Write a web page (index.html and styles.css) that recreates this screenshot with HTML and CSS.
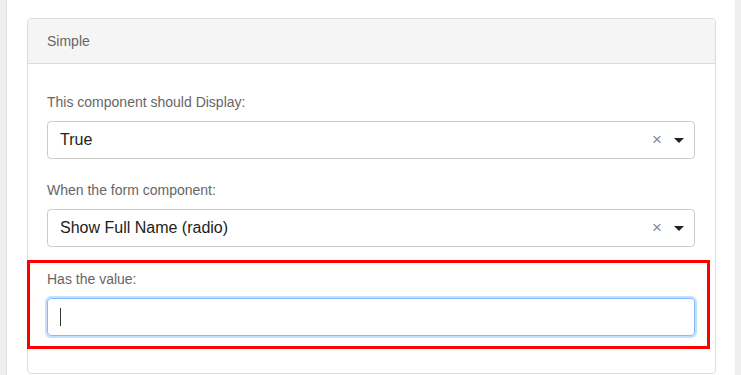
FILE: index.html
```html
<!DOCTYPE html>
<html>
<head>
<meta charset="utf-8">
<link rel="stylesheet" href="styles.css">
</head>
<body>
<div class="page">
  <div class="panel">
    <div class="panel-heading">Simple</div>
    <div class="panel-body">
      <div class="group">
        <label class="lbl">This component should Display:</label>
        <div class="select">
          <span class="value">True</span>
          <span class="clear">×</span>
          <span class="caret"></span>
        </div>
      </div>
      <div class="group">
        <label class="lbl">When the form component:</label>
        <div class="select">
          <span class="value">Show Full Name (radio)</span>
          <span class="clear">×</span>
          <span class="caret"></span>
        </div>
      </div>
      <div class="group last">
        <label class="lbl">Has the value:</label>
        <div class="input"><span class="cursor"></span></div>
        <div class="highlight"></div>
      </div>
    </div>
  </div>
</div>
</body>
</html>
```
FILE: styles.css
```css
html, body {
  margin: 0;
  padding: 0;
  background: #efefef;
  font-family: "Liberation Sans", Arial, sans-serif;
}
.page {
  margin-left: 6px;
  width: 729px;
  height: 375px;
  background: #fff;
  border-left: 1px solid #e2e2e2;
  padding: 18px 0 0 20px;
  box-sizing: border-box;
}
.panel {
  width: 689px;
  height: 356px;
  box-sizing: border-box;
  border: 1px solid #dcdcdc;
  border-radius: 4px;
  background: #fff;
}
.panel-heading {
  height: 45px;
  box-sizing: border-box;
  background: #f5f5f5;
  border-bottom: 1px solid #dcdcdc;
  border-radius: 3px 3px 0 0;
  padding: 14px 0 0 19px;
  font-size: 14px;
  line-height: 16px;
  color: #666;
}
.panel-body {
  padding: 18px 20px 0 19px;
}
.group {
  position: relative;
  padding: 10px 0 10px 0;
}
.lbl {
  display: block;
  font-size: 14px;
  line-height: 20px;
  color: #666;
  margin-bottom: 9px;
}
.select {
  height: 38px;
  box-sizing: border-box;
  border: 1px solid #ccc;
  border-radius: 4px;
  display: flex;
  align-items: center;
  padding: 0 10px 0 12px;
}
.value {
  flex: 1;
  font-size: 16px;
  color: #222;
}
.clear {
  font-size: 17px;
  color: #8a8a8a;
  margin-right: 12px;
  line-height: 16px;
}
.caret {
  width: 0;
  height: 0;
  border-left: 5px solid transparent;
  border-right: 5px solid transparent;
  border-top: 5px solid #222;
}
.group + .group {
  margin-top: 1px;
}
.group.last {
  margin-top: 2px;
}
.input {
  height: 38px;
  box-sizing: border-box;
  border: 1px solid #80bdff;
  border-radius: 4px;
  box-shadow: 0 0 0 2px #c6e0fc;
  display: flex;
  align-items: center;
  padding-left: 12px;
}
.cursor {
  width: 1px;
  height: 18px;
  background: #333;
}
.highlight {
  position: absolute;
  left: -20px;
  right: -15px;
  top: 1px;
  bottom: -3px;
  border: 3px solid #f00;
  pointer-events: none;
}
```
